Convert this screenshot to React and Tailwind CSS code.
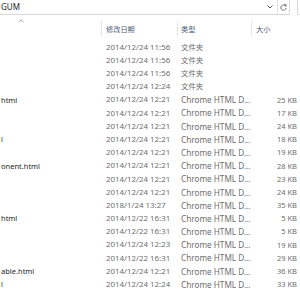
import React from 'react'

const rows = [
  { name: '', date: '2014/12/24 11:56', type: '文件夹', size: '' },
  { name: '', date: '2014/12/24 11:56', type: '文件夹', size: '' },
  { name: '', date: '2014/12/24 11:56', type: '文件夹', size: '' },
  { name: '', date: '2014/12/24 12:24', type: '文件夹', size: '' },
  { name: 'html', date: '2014/12/24 12:21', type: 'Chrome HTML D...', size: '25 KB' },
  { name: '', date: '2014/12/24 12:21', type: 'Chrome HTML D...', size: '17 KB' },
  { name: '', date: '2014/12/24 12:21', type: 'Chrome HTML D...', size: '24 KB' },
  { name: 'l', date: '2014/12/24 12:21', type: 'Chrome HTML D...', size: '18 KB' },
  { name: '', date: '2014/12/24 12:21', type: 'Chrome HTML D...', size: '19 KB' },
  { name: 'onent.html', date: '2014/12/24 12:21', type: 'Chrome HTML D...', size: '28 KB' },
  { name: '', date: '2014/12/24 12:21', type: 'Chrome HTML D...', size: '23 KB' },
  { name: '', date: '2014/12/24 12:21', type: 'Chrome HTML D...', size: '24 KB' },
  { name: '', date: '2018/1/24 13:27', type: 'Chrome HTML D...', size: '35 KB' },
  { name: 'html', date: '2014/12/22 16:31', type: 'Chrome HTML D...', size: '5 KB' },
  { name: '', date: '2014/12/22 16:31', type: 'Chrome HTML D...', size: '5 KB' },
  { name: '', date: '2014/12/24 12:23', type: 'Chrome HTML D...', size: '19 KB' },
  { name: '', date: '2014/12/22 16:31', type: 'Chrome HTML D...', size: '29 KB' },
  { name: 'able.html', date: '2014/12/24 12:21', type: 'Chrome HTML D...', size: '36 KB' },
  { name: 'l', date: '2014/12/24 12:24', type: 'Chrome HTML D...', size: '33 KB' },
]

const App = () => {
  return (
    <div
      className="w-[300px] h-[300px] bg-white overflow-hidden text-[7.5px] leading-none"
      style={{ fontFamily: '"Noto Sans", "Noto Sans CJK SC", sans-serif' }}
    >
      {/* Address bar */}
      <div className="flex h-[15px]">
        <div className="flex-1 flex items-center border-b border-r border-[#d9d9d9]">
          <span className="pl-px text-[8px] text-[#1e1e1e]">GUM</span>
          <div className="ml-auto flex items-center h-full">
            <svg width="6" height="4" viewBox="0 0 6 4" className="mr-[4px]">
              <path d="M0.5 0.5 L3 3 L5.5 0.5" fill="none" stroke="#555" strokeWidth="1" />
            </svg>
            <div className="w-px h-full bg-[#e3e3e3]" />
            <svg width="7" height="7" viewBox="0 0 7 7" className="mx-[2px]">
              <path d="M5.6 2.2 A2.6 2.6 0 1 0 6 4" fill="none" stroke="#666" strokeWidth="0.9" />
              <path d="M4 0.6 L6 0.6 L6 2.6" fill="none" stroke="#666" strokeWidth="0.9" />
            </svg>
          </div>
        </div>
        <div className="w-[7px]" />
        <div className="w-[3px] border-l border-b border-[#d9d9d9]" />
      </div>

      {/* Column headers */}
      <div className="flex h-[23px] mt-[2px] text-[#4c607a] text-[7.2px]">
        <div className="ml-[-60px] w-[161px] flex flex-col items-center">
          <svg width="6" height="4" viewBox="0 0 6 4" className="mt-[2px]">
            <path d="M0.5 3.2 L3 0.8 L5.5 3.2" fill="none" stroke="#7a8aa0" strokeWidth="0.8" />
          </svg>
        </div>
        <div className="w-[76px] flex items-center">
          <div className="w-px h-[15px] bg-[#e5e5e5]" />
          <span className="pl-[4px] mt-[2px]">修改日期</span>
        </div>
        <div className="w-[74px] flex items-center">
          <div className="w-px h-[15px] bg-[#e5e5e5]" />
          <span className="pl-[3px] mt-[2px]">类型</span>
        </div>
        <div className="flex-1 flex items-center">
          <div className="w-px h-[15px] bg-[#e5e5e5]" />
          <span className="pl-[4px] mt-[2px]">大小</span>
        </div>
      </div>

      {/* File rows */}
      <div className="flex flex-col mt-[1px]">
        {rows.map((r, i) => (
          <div key={i} className="flex items-center h-[13.2px]">
            <div className="w-[101px] pl-px text-[#1e1e1e] whitespace-nowrap overflow-hidden">{r.name}</div>
            <div className="w-[76px] pl-[5px] text-[#6d6d6d] text-[7.9px] whitespace-nowrap">{r.date}</div>
            <div
              className={
                r.size
                  ? 'w-[74px] pl-[4px] text-[#6d6d6d] text-[8.2px] whitespace-nowrap'
                  : 'w-[74px] pl-[4px] text-[#6d6d6d] text-[7.4px] whitespace-nowrap'
              }
            >
              {r.type}
            </div>
            <div className="flex-1 pr-[3px] text-right text-[#6d6d6d] whitespace-nowrap">{r.size}</div>
          </div>
        ))}
      </div>
    </div>
  )
}

export default App
